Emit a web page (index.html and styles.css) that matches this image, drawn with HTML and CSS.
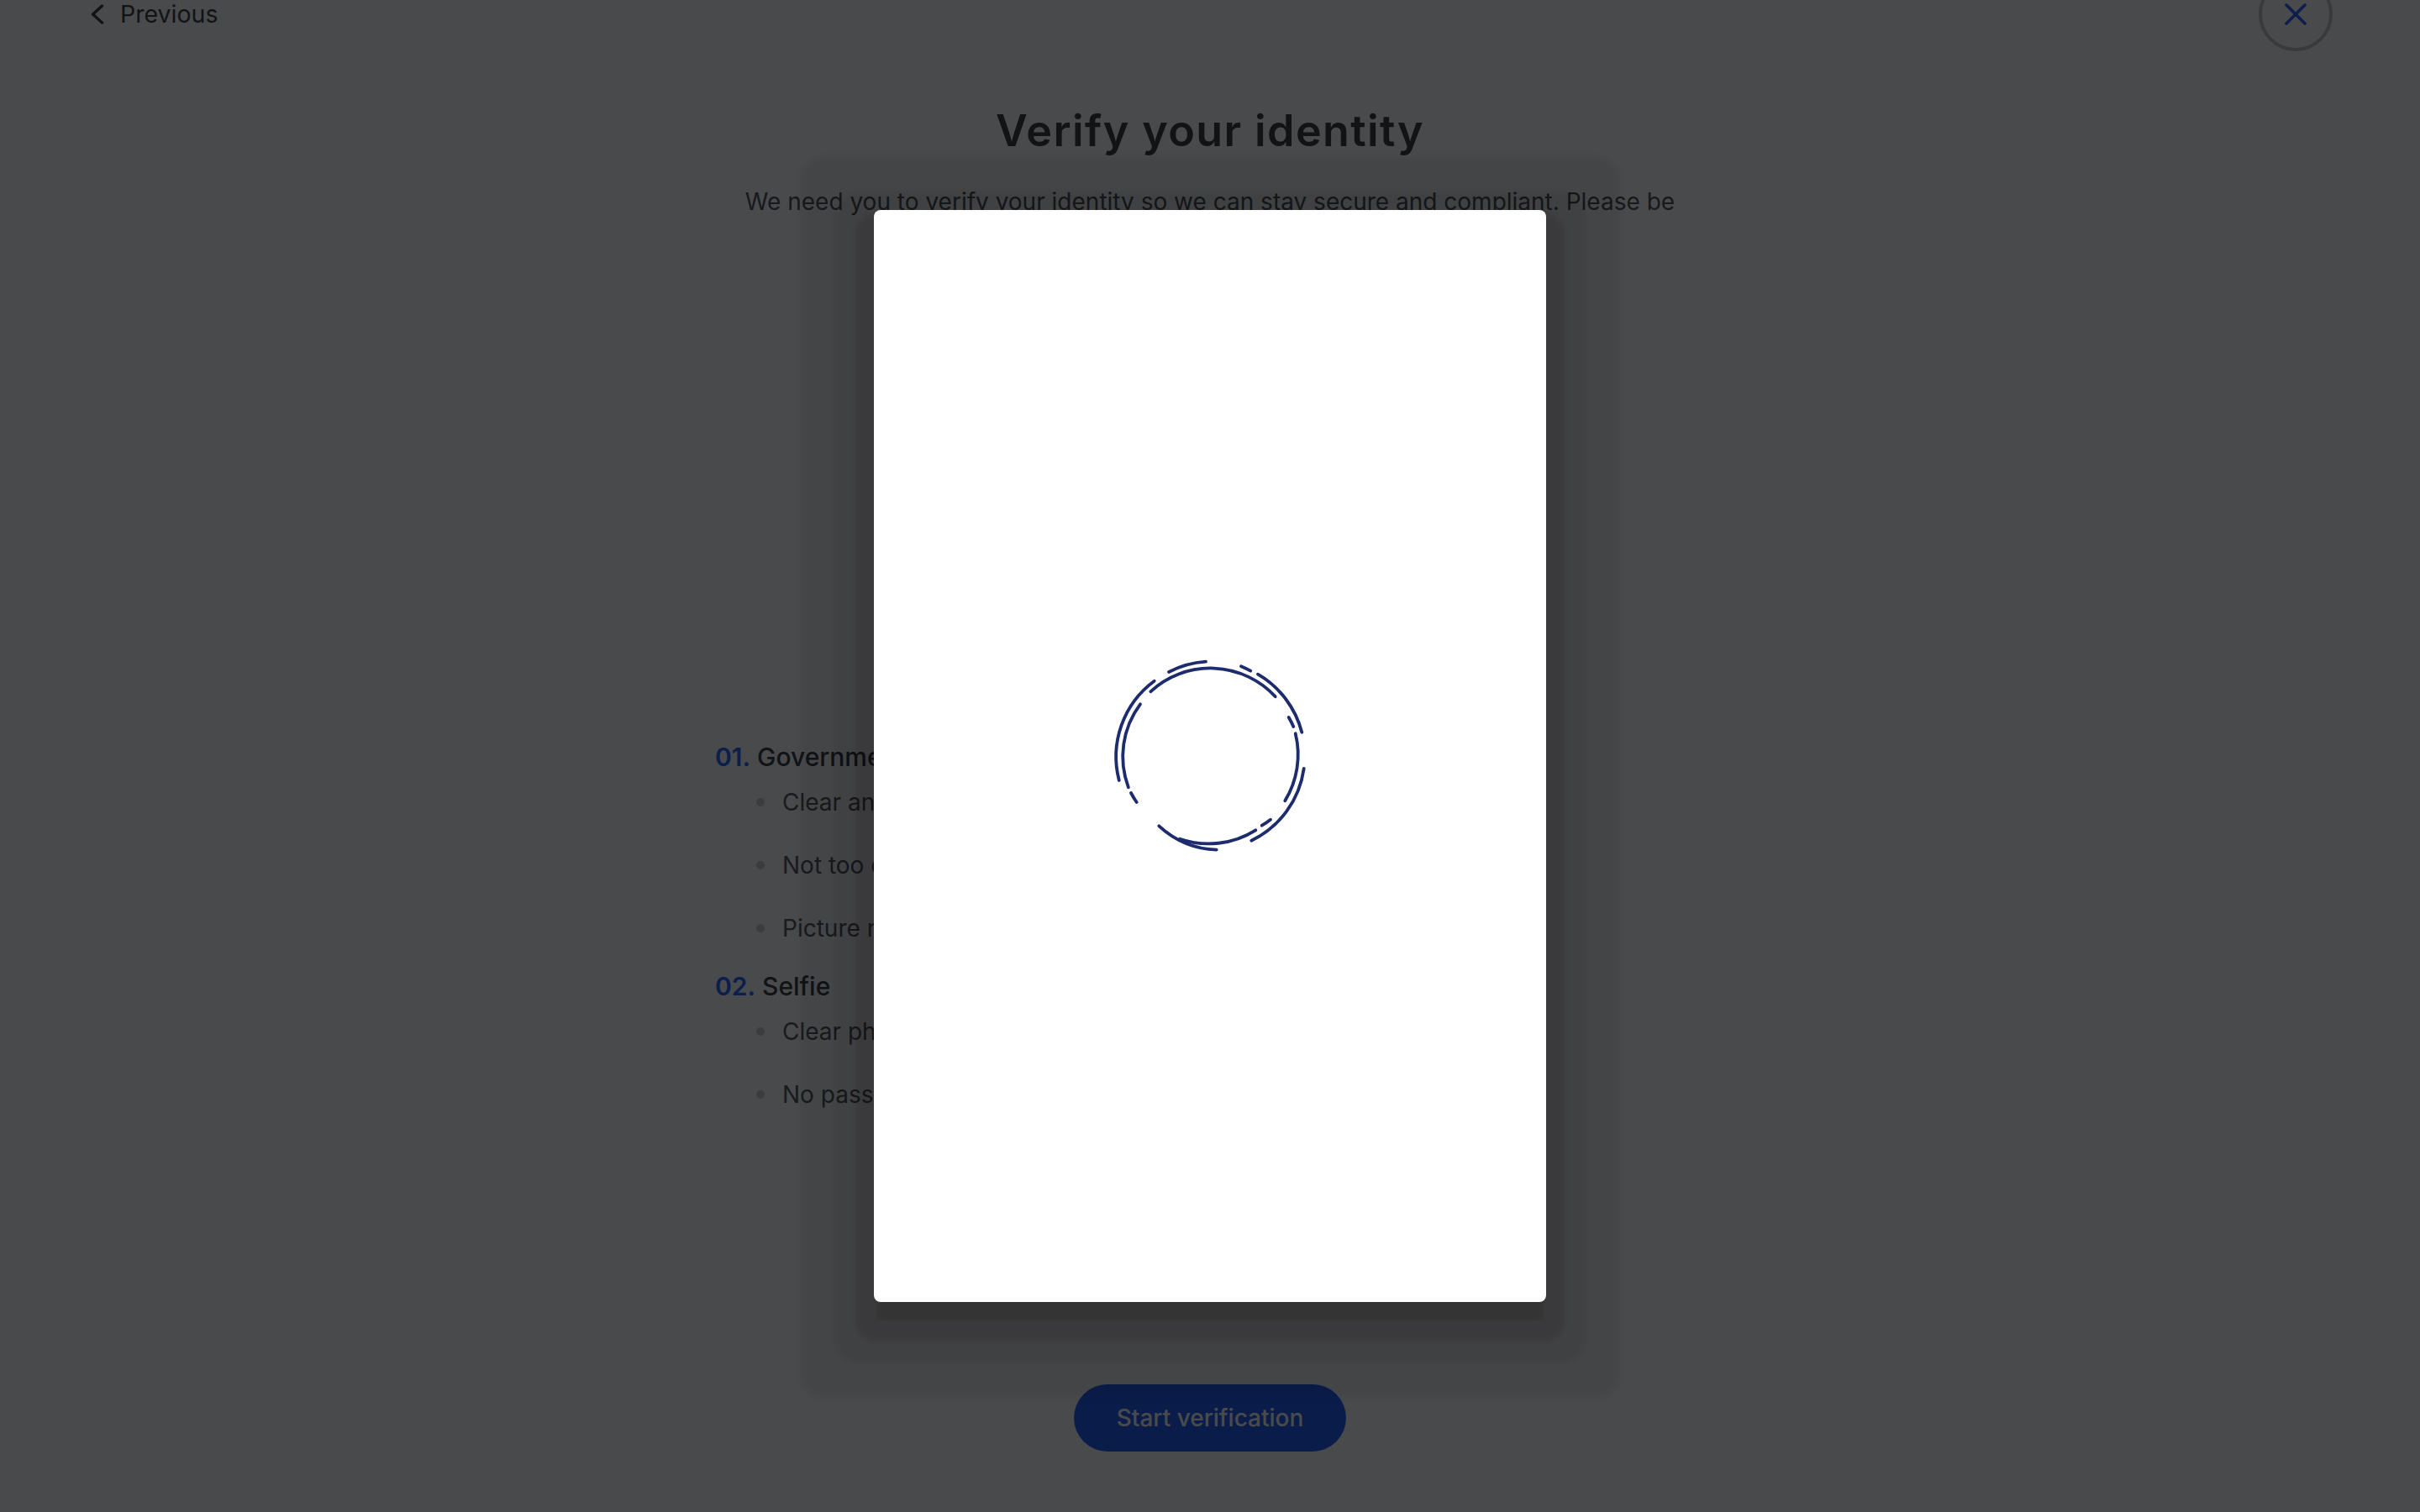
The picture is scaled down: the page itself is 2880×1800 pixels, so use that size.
FILE: index.html
```html
<!DOCTYPE html>
<html lang="en">
<head>
<meta charset="utf-8">
<title>Verify your identity</title>
<link rel="stylesheet" href="styles.css">
</head>
<body>
<div class="page">
  <header class="topbar">
    <button class="back" type="button">
      <svg class="back-icon" width="16" height="24" viewBox="0 0 16 24" aria-hidden="true"><polyline points="13.5,2 2.5,12 13.5,22" fill="none" stroke="currentColor" stroke-width="3.4" stroke-linecap="round" stroke-linejoin="round"/></svg>
      <span>Previous</span>
    </button>
    <button class="close" type="button" aria-label="Close">
      <svg width="26" height="26" viewBox="0 0 26 26" aria-hidden="true"><path d="M2 2 L24 24 M24 2 L2 24" fill="none" stroke="currentColor" stroke-width="3.6" stroke-linecap="round"/></svg>
    </button>
  </header>

  <main class="content">
    <h1 class="title">Verify your identity</h1>
    <p class="lead">We need you to verify your identity so we can stay secure and compliant. Please be ready with your ID document.</p>

    <div class="illustration" aria-hidden="true"></div>

    <section class="requirements">
      <div class="group">
        <h2 class="group-title"><span class="num">01.</span> Government ID</h2>
        <ul class="reqs">
          <li>Clear and readable</li>
          <li>Not too dark or bright</li>
          <li>Picture not blurry</li>
        </ul>
      </div>
      <div class="group">
        <h2 class="group-title"><span class="num">02.</span> Selfie</h2>
        <ul class="reqs">
          <li>Clear photo of your face</li>
          <li>No passport photos</li>
        </ul>
      </div>
    </section>

    <button class="cta" type="button">Start verification</button>
  </main>
</div>

<div class="overlay">
  <div class="modal" role="dialog" aria-label="Loading">
    <svg class="spinner" width="240" height="240" viewBox="-120 -120 240 240" aria-hidden="true">
      <g fill="none" stroke="#1c2c6e" stroke-width="3.8" stroke-linecap="round">
        <path d="M -70.7 -76.7 A 105 105 0 0 1 77.7 -70.7"/>
        <path d="M -49 -100 A 112 112 0 0 1 -5 -112.3"/>
        <path d="M 37 -106.7 A 112 112 0 0 1 48.3 -101.3"/>
        <path d="M 57 -97.3 A 113 113 0 0 1 109.3 -28.3"/>
        <path d="M 93.7 -46 A 105 105 0 0 1 99.3 -35"/>
        <path d="M 101.7 -26.7 A 105 105 0 0 1 89.3 53.3"/>
        <path d="M 111.7 15 A 112 112 0 0 1 49.3 100.7"/>
        <path d="M 72 75.7 A 104 104 0 0 1 61.7 82.7"/>
        <path d="M 54.3 88.3 A 105 105 0 0 1 -35.9 98.7"/>
        <path d="M -60.7 83.3 A 108 108 0 0 0 7.7 111.7"/>
        <path d="M -66.3 -89.3 A 112 112 0 0 0 -108.2 29"/>
        <path d="M -83 -61.7 A 104 104 0 0 0 -97.1 37.3"/>
        <path d="M -94 44 A 104 104 0 0 0 -87.3 55"/>
      </g>
    </svg>
  </div>
</div>
</body>
</html>
```

FILE: styles.css
```css
* { box-sizing: border-box; }

html, body {
  margin: 0;
  padding: 0;
  background: #ffffff;
  height: 100%;
  overflow: hidden;
}

body {
  font-family: "Inter", "Noto Sans", "Liberation Sans", sans-serif;
  color: #3c3c3e;
}

.page {
  width: 100%;
}

.topbar {
  display: flex;
  align-items: center;
  justify-content: space-between;
  height: 88px;
  margin-top: -27px;
  padding: 0 104px 0 108px;
}

.back {
  display: flex;
  align-items: center;
  gap: 19px;
  border: 0;
  background: none;
  padding: 0;
  font-family: inherit;
  font-size: 28.5px;
  line-height: 34px;
  color: #3c3c3e;
  cursor: pointer;
}

.back-icon {
  color: #3a3a3c;
  display: block;
}

.close {
  width: 88px;
  height: 88px;
  border-radius: 50%;
  border: 4px solid #c4c5c7;
  background: #ffffff;
  color: #2660ff;
  display: flex;
  align-items: center;
  justify-content: center;
  padding: 0;
  cursor: pointer;
}

.close svg { display: block; }

.content {
  width: 1178px;
  margin: 0 auto;
  display: flex;
  flex-direction: column;
}

.title {
  margin: 64px 0 0;
  text-align: center;
  font-size: 52px;
  line-height: 62px;
  font-weight: 600;
  letter-spacing: 1.4px;
  color: #3a3a3c;
}

.lead {
  margin: 33px auto 0;
  max-width: 1130px;
  text-align: center;
  font-size: 28px;
  line-height: 40px;
  color: #4f5052;
}

.illustration {
  height: 581px;
}

.requirements {
  display: flex;
  flex-direction: column;
  gap: 29px;
}

.group-title {
  margin: 0 0 14px;
  font-size: 30px;
  line-height: 40px;
  font-weight: 500;
  color: #3a3a3c;
}

.num {
  color: #2660ff;
  font-weight: 600;
}

.reqs {
  list-style: none;
  margin: 0;
  padding: 0 0 0 49px;
  display: flex;
  flex-direction: column;
  gap: 35px;
}

.reqs li {
  display: flex;
  align-items: center;
  gap: 21px;
  font-size: 28px;
  line-height: 40px;
  color: #555658;
}

.reqs li::before {
  content: "";
  width: 10px;
  height: 10px;
  border-radius: 50%;
  background: #cdcdcd;
  flex: none;
}

.cta {
  align-self: center;
  margin-top: 325px;
  height: 80px;
  padding: 0 51px;
  border: 0;
  border-radius: 40px;
  background: #1f5df6;
  color: #ffffff;
  font-family: inherit;
  font-size: 28px;
  font-weight: 500;
  cursor: pointer;
}

.overlay {
  position: fixed;
  inset: 0;
  background: rgba(3, 4, 7, 0.72);
  display: flex;
  align-items: center;
  justify-content: center;
}

.modal {
  width: 800px;
  height: 1300px;
  background: #ffffff;
  border-radius: 8px;
  display: flex;
  align-items: center;
  justify-content: center;
  box-shadow:
    0 25px 5px -3px rgba(0, 0, 0, 0.107),
    0 25px 5px 22px rgba(0, 0, 0, 0.094),
    0 25px 6px 46px rgba(0, 0, 0, 0.059),
    0 25px 8px 88px rgba(0, 0, 0, 0.068);
}

.spinner { display: block; }
```
